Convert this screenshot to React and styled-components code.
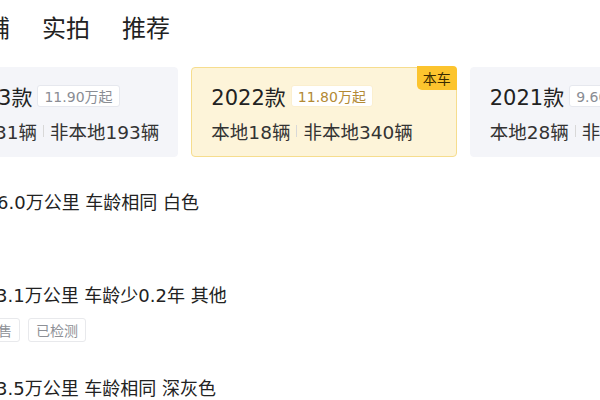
import React from "react";
import styled, { createGlobalStyle } from "styled-components";

const Global = createGlobalStyle`
  html, body { margin: 0; padding: 0; background: #fff; overflow: hidden; }
  body { font-family: "DejaVu Sans", "Noto Sans CJK SC", sans-serif; color: #222; }
`;

const Page = styled.div`
  width: 600px;
  height: 400px;
  overflow: hidden;
  position: relative;
`;

const Tabs = styled.div`
  display: flex;
  gap: 32px;
  margin-left: -38px;
  padding-top: 14px;
`;

const Tab = styled.div`
  font-size: 24px;
  line-height: 30px;
  color: #222;
  white-space: nowrap;
`;

const Cards = styled.div`
  display: flex;
  gap: 13px;
  margin-left: -62px;
  margin-top: 23px;
`;

const Card = styled.div`
  position: relative;
  flex-shrink: 0;
  box-sizing: border-box;
  height: 90px;
  padding: 13px ${(p) => (p.$active ? "43px" : "18px")} 0 19px;
  border-radius: 4px;
  border: 1px solid ${(p) => (p.$active ? "#f6dd8e" : "#f4f5f9")};
  background: ${(p) => (p.$active ? "#fdf4d9" : "#f4f5f9")};
`;

const TitleRow = styled.div`
  display: flex;
  align-items: center;
  height: 30px;
  white-space: nowrap;
`;

const Year = styled.span`
  font-size: 21px;
  color: #222;
`;

const Price = styled.span`
  margin-left: 5px;
  height: 22px;
  box-sizing: border-box;
  padding: 0 6px;
  display: inline-flex;
  align-items: center;
  font-size: 14px;
  border-radius: 3px;
  background: #fff;
  border: 1px solid ${(p) => (p.$active ? "#fbefcf" : "#e6e8ee")};
  color: ${(p) => (p.$active ? "#b38a35" : "#8a8d94")};
`;

const CountRow = styled.div`
  display: flex;
  align-items: center;
  margin-top: 8px;
  height: 24px;
  font-size: 18.5px;
  color: #333;
  white-space: nowrap;
`;

const Sep = styled.span`
  display: inline-block;
  width: 1px;
  height: 12px;
  background: #d8d8d8;
  margin: 0 6px;
`;

const Badge = styled.div`
  position: absolute;
  top: -2px;
  right: -1px;
  height: 24px;
  padding: 0 6px;
  display: flex;
  align-items: center;
  font-size: 14px;
  color: #3a2a00;
  background: #fcc42e;
  border-radius: 0 4px 0 5px;
`;

const List = styled.div`
  margin-top: 33px;
`;

const Item = styled.div`
  height: 93px;
`;

const Info = styled.div`
  margin-left: ${(p) => p.$shift}px;
  font-size: 18px;
  line-height: 26px;
  color: #222;
  white-space: nowrap;
`;

const TagRow = styled.div`
  display: flex;
  gap: 8px;
  margin-top: 9px;
  margin-left: -24px;
`;

const Tag = styled.span`
  height: 24px;
  box-sizing: border-box;
  padding: 0 7px;
  display: inline-flex;
  align-items: center;
  font-size: 14px;
  color: #8d9096;
  border: 1px solid #e8e9ec;
  border-radius: 3px;
  white-space: nowrap;
`;

const cards = [
  { year: "2023款", price: "11.90万起", local: "本地31辆", other: "非本地193辆" },
  { year: "2022款", price: "11.80万起", local: "本地18辆", other: "非本地340辆", active: true },
  { year: "2021款", price: "9.60万起", local: "本地28辆", other: "非本地265辆" },
];

const items = [
  { text: "6.0万公里 车龄相同 白色", shift: -3, tags: [] },
  { text: "3.1万公里 车龄少0.2年 其他", shift: -4, tags: ["在售", "已检测"] },
  { text: "3.5万公里 车龄相同 深灰色", shift: -4, tags: [] },
];

export default function App() {
  return (
    <Page>
      <Global />
      <Tabs>
        <Tab>店铺</Tab>
        <Tab>实拍</Tab>
        <Tab>推荐</Tab>
      </Tabs>
      <Cards>
        {cards.map((c) => (
          <Card key={c.year} $active={c.active}>
            {c.active && <Badge>本车</Badge>}
            <TitleRow>
              <Year>{c.year}</Year>
              <Price $active={c.active}>{c.price}</Price>
            </TitleRow>
            <CountRow>
              {c.local}
              <Sep />
              {c.other}
            </CountRow>
          </Card>
        ))}
      </Cards>
      <List>
        {items.map((it) => (
          <Item key={it.text}>
            <Info $shift={it.shift}>{it.text}</Info>
            {it.tags.length > 0 && (
              <TagRow>
                {it.tags.map((t) => (
                  <Tag key={t}>{t}</Tag>
                ))}
              </TagRow>
            )}
          </Item>
        ))}
      </List>
    </Page>
  );
}
